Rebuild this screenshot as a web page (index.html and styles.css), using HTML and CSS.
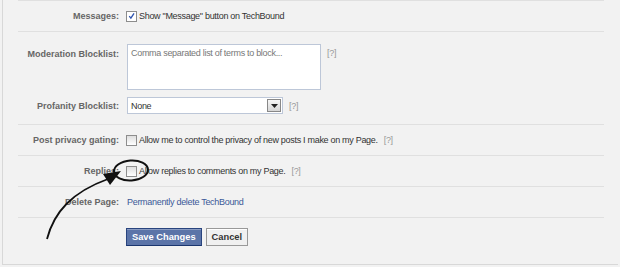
FILE: index.html
```html
<!DOCTYPE html>
<html lang="en">
<head>
  <meta charset="UTF-8">
  <title>Page Settings</title>
  <link rel="stylesheet" href="styles.css">
</head>
<body>
  <div class="panel">
    <div class="row">
      <div class="label">Messages:</div>
      <div class="field">
        <span class="check checked"><svg viewBox="0 0 10 10" width="10" height="10"><path d="M2.5 5.2 L4.3 7.4 L7.8 2" fill="none" stroke="#2f55b0" stroke-width="1.5"/></svg></span>
        <span>Show "Message" button on TechBound</span>
      </div>
    </div>
    <div class="section">
      <div class="row-top">
        <div class="label">Moderation Blocklist:</div>
        <div class="field top">
          <div class="textarea">Comma separated list of terms to block...</div>
          <span class="help">[?]</span>
        </div>
      </div>
      <div class="row-sel">
        <div class="label">Profanity Blocklist:</div>
        <div class="field">
          <div class="select"><span>None</span><span class="drop"><svg viewBox="0 0 7 4" width="7" height="4"><path d="M0 0 H7 L3.5 4 Z" fill="#222"/></svg></span></div>
          <span class="help">[?]</span>
        </div>
      </div>
    </div>
    <div class="row">
      <div class="label">Post privacy gating:</div>
      <div class="field">
        <span class="check"></span>
        <span>Allow me to control the privacy of new posts I make on my Page.</span>
        <span class="help">[?]</span>
      </div>
    </div>
    <div class="row">
      <div class="label">Replies:</div>
      <div class="field">
        <span class="check"></span>
        <span>Allow replies to comments on my Page.</span>
        <span class="help">[?]</span>
      </div>
    </div>
    <div class="row">
      <div class="label">Delete Page:</div>
      <div class="field"><a href="#" class="link">Permanently delete TechBound</a></div>
    </div>
    <div class="buttons">
      <button class="btn primary">Save Changes</button>
      <button class="btn">Cancel</button>
    </div>
  </div>
  <!-- hand drawn annotation -->
  <svg class="mark" width="160" height="100" viewBox="0 0 160 100">
    <ellipse cx="131" cy="20.5" rx="17" ry="10" fill="none" stroke="#111" stroke-width="2" transform="rotate(-4 131 20.5)"/>
    <path d="M47 89 C54 62 72 42 108 29" fill="none" stroke="#111" stroke-width="1.8"/>
    <path d="M103 24 L121 21 L110 35 Z" fill="#111"/>
  </svg>
</body>
</html>
```
FILE: styles.css
```css
body { margin:0; background:#f2f2f2; font-family:"Liberation Sans", Arial, sans-serif; font-size:9px; color:#333; overflow:hidden; }
.panel { margin-left:2px; border-left:1px solid #d8d8d8; border-bottom:1px solid #d8d8d8; height:265px; padding:0 15px; box-sizing:border-box; width:616px; }
.panel > div { width:586px; box-sizing:border-box; }
.row { display:flex; align-items:center; height:31px; border-top:1px solid #e0e0e0; }
.label { width:101px; flex:none; text-align:right; font-weight:bold; color:#666; white-space:nowrap; }
.field { display:flex; align-items:center; gap:2px; padding-left:8px; white-space:nowrap; letter-spacing:-0.3px; }
.field.top { align-items:flex-start; }
.section { border-top:1px solid #e0e0e0; padding:12px 0 10px; }
.row-top { display:flex; align-items:flex-start; }
.row-top .label { padding-top:5px; }
.row-sel { display:flex; align-items:center; margin-top:7px; }
.textarea { width:186px; height:38px; border:1px solid #bdc7d8; background:#fff; padding:3px 3px; color:#777; }
.select { width:151px; height:15px; border:1px solid #bdc7d8; background:#fff; display:flex; align-items:center; justify-content:space-between; padding-left:3px; box-sizing:content-box; }
.drop { width:12px; height:11px; margin-right:1px; border:1px solid #888; background:linear-gradient(#f6f6f6,#d6d6d6); display:flex; align-items:center; justify-content:center; }
.help { color:#999; margin-left:4px; }
.field.top .help { padding-top:4px; }
.check { width:9px; height:9px; border:1px solid #8d8d8d; background:linear-gradient(#dedede,#fff); display:inline-flex; align-items:center; justify-content:center; margin-left:-1px; }
.check.checked { background:#fff; }
.link { color:#3b5998; text-decoration:none; }
.buttons { border-top:1px solid #e0e0e0; display:flex; gap:4px; padding:10px 0 0 108px; }
.btn { font-family:"Liberation Sans", Arial, sans-serif; font-size:9.3px; font-weight:bold; height:18px; padding:0 5px; border:1px solid #999; background:#f0f0f0; color:#333; box-shadow:inset 0 1px 0 #fff; }
.btn.primary { background:#5b74a8; border-color:#29447e #29447e #1a356e; color:#fff; box-shadow:inset 0 1px 0 #8a9cc2; }
.mark { position:absolute; left:0; top:150px; }
```
